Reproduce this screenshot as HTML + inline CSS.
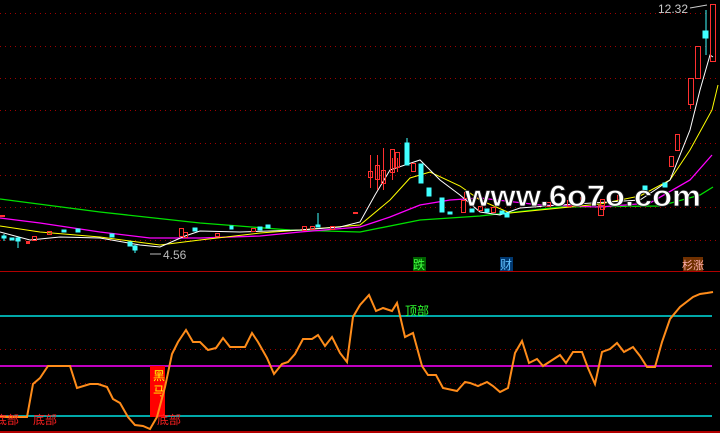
<!DOCTYPE html>
<html><head><meta charset="utf-8"><style>
html,body{margin:0;padding:0;background:#000;width:720px;height:433px;overflow:hidden}
svg{display:block}
text{font-family:"Liberation Sans","Noto Sans CJK SC",sans-serif}
</style></head><body>
<svg width="720" height="433" viewBox="0 0 720 433" xmlns="http://www.w3.org/2000/svg">
<g stroke="#a00000" stroke-width="1" stroke-dasharray="1 4">
<line x1="0" y1="13.5" x2="720" y2="13.5"/><line x1="0" y1="46.5" x2="720" y2="46.5"/>
<line x1="0" y1="78.5" x2="720" y2="78.5"/><line x1="0" y1="110.5" x2="720" y2="110.5"/>
<line x1="0" y1="143.5" x2="720" y2="143.5"/><line x1="0" y1="175.5" x2="720" y2="175.5"/>
<line x1="0" y1="207.5" x2="720" y2="207.5"/><line x1="0" y1="240.5" x2="720" y2="240.5"/>
<line x1="0" y1="349.5" x2="720" y2="349.5"/><line x1="0" y1="383.5" x2="720" y2="383.5"/>
</g>
<line x1="0" y1="271.5" x2="720" y2="271.5" stroke="#b00000"/>
<line x1="0" y1="432" x2="720" y2="432" stroke="#b00000" stroke-width="2"/>
<polyline fill="none" stroke="#00e000" stroke-width="1.3" points="0,199 100,212 200,223 290,230 360,232 420,220 480,216 560,207 660,206 700,195 713,187"/>
<polyline fill="none" stroke="#ff00ff" stroke-width="1.3" points="0,218 40,223 100,232 150,238 200,238 260,236 300,232 360,227 390,217 420,205 450,200 480,198 540,205 600,207 650,203 690,180 712,155"/>
<polyline fill="none" stroke="#ffff00" stroke-width="1" points="0,226 40,232 100,237 160,245 200,240 260,233 300,230 360,225 390,200 410,178 430,172 460,186 480,200 510,213 540,210 600,204 640,196 670,180 690,150 712,110 718,85"/>
<polyline fill="none" stroke="#ffffff" stroke-width="1" points="0,232 30,240 60,237 100,238 140,245 160,247 185,236 200,231 240,232 300,230 340,227 360,222 375,195 390,170 405,165 420,160 440,180 460,195 480,212 500,215 520,208 560,205 640,200 670,180 690,130 700,90 710,55 713,57"/>
<g stroke="#ff3030" fill="none" stroke-width="1">
<rect x="32.5" y="236.5" width="4" height="4"/><rect x="47.5" y="231.5" width="4" height="3"/><rect x="183.5" y="232.5" width="4" height="5"/>
<rect x="179.5" y="228.5" width="4" height="8"/><rect x="215.5" y="233.5" width="4" height="3"/><rect x="251.5" y="228.5" width="4" height="3"/>
<rect x="302.5" y="226.5" width="4" height="4"/><rect x="310.5" y="226.5" width="4" height="3"/><rect x="330.5" y="226.5" width="4" height="3"/>
<line x1="370.5" y1="155" x2="370.5" y2="188"/><rect x="368.5" y="171.5" width="4" height="6"/>
<line x1="377.5" y1="155" x2="377.5" y2="190"/><rect x="375.5" y="165.5" width="4" height="14"/>
<line x1="383.5" y1="148" x2="383.5" y2="190"/><rect x="381.5" y="170.5" width="4" height="13"/>
<line x1="392.5" y1="158" x2="392.5" y2="180"/><rect x="390.5" y="149.5" width="4" height="23"/>
<line x1="397.5" y1="158" x2="397.5" y2="172"/><rect x="395.5" y="152.5" width="4" height="15"/>
<rect x="411.5" y="163.5" width="4" height="8"/>
<rect x="461.5" y="200.5" width="4" height="12"/>
<rect x="464.5" y="192.5" width="4" height="6"/><rect x="478.5" y="206.5" width="4" height="4"/><rect x="491.5" y="207.5" width="4" height="5"/>
<rect x="546.5" y="202.5" width="4" height="4"/><rect x="567.5" y="200.5" width="4" height="6"/><rect x="580.5" y="197.5" width="4" height="4"/>
<rect x="600.5" y="199.5" width="4" height="10"/><rect x="617.5" y="195.5" width="4" height="4"/>
<rect x="598.5" y="205.5" width="5" height="10"/>
<rect x="669.5" y="156.5" width="4" height="10"/><rect x="675.5" y="134.5" width="4" height="16"/>
<rect x="688.5" y="78.5" width="5" height="26"/><line x1="690.5" y1="104" x2="690.5" y2="109"/>
<rect x="695.5" y="46.5" width="5" height="32"/>
<rect x="710.5" y="4.5" width="5" height="57"/>
</g>
<g fill="#ff3030"><rect x="0" y="215" width="5" height="2"/><rect x="353" y="212" width="5" height="2"/><rect x="26" y="241" width="4" height="3"/></g>
<g fill="#40ffff" stroke="#40ffff">
<line x1="4" y1="234" x2="4" y2="241"/><rect x="2" y="236" width="4" height="2"/>
<line x1="18" y1="237" x2="18" y2="248"/><rect x="16" y="238" width="4" height="3"/>
<rect x="10" y="238" width="4" height="2"/><rect x="62" y="230" width="4" height="2"/>
<rect x="76" y="229" width="4" height="3"/><rect x="110" y="234" width="4" height="3"/>
<rect x="128" y="242" width="4" height="4"/><line x1="135" y1="245" x2="135" y2="253"/><rect x="133" y="246" width="4" height="4"/>
<rect x="193" y="228" width="4" height="3"/><rect x="230" y="226" width="3" height="3"/><rect x="258" y="227" width="4" height="3"/>
<rect x="266" y="225" width="4" height="3"/><line x1="318" y1="213" x2="318" y2="226"/><rect x="316" y="225" width="4" height="2"/>
<line x1="407" y1="138" x2="407" y2="145"/><rect x="405" y="143" width="4" height="22"/>
<rect x="419" y="164" width="4" height="19"/><rect x="427" y="188" width="4" height="8"/>
<rect x="440" y="198" width="4" height="14"/><rect x="448" y="212" width="4" height="2"/>
<rect x="470" y="209" width="4" height="3"/><rect x="485" y="209" width="4" height="3"/><rect x="500" y="211" width="4" height="3"/>
<rect x="505" y="213" width="4" height="4"/><rect x="643" y="186" width="4" height="4"/><rect x="663" y="183" width="4" height="4"/>
<line x1="706" y1="10" x2="706" y2="55"/><rect x="703" y="31" width="5" height="7"/>
</g>
<text x="465" y="206" font-size="30" font-weight="bold" fill="#fff" stroke="#222" stroke-width="0.8" textLength="236" lengthAdjust="spacingAndGlyphs">www.6o7o.com</text>
<text x="163" y="259" font-size="12" fill="#bbb">4.56</text>
<line x1="150" y1="254" x2="161" y2="254" stroke="#bbb"/>
<text x="658" y="13" font-size="12" fill="#ccc">12.32</text>
<line x1="690" y1="8" x2="707" y2="5" stroke="#ccc"/>
<rect x="413" y="257" width="13" height="14" fill="#006000"/><text x="413" y="269" font-size="12" fill="#40ff40">跌</text>
<rect x="500" y="257" width="13" height="14" fill="#003870"/><text x="500" y="269" font-size="12" fill="#60c0ff">财</text>
<rect x="683" y="257" width="20" height="14" fill="#703000"/><text x="682" y="269" font-size="11" fill="#ffb0b0">杉涨</text>
<line x1="0" y1="316" x2="712" y2="316" stroke="#00e0e0" stroke-width="1.5"/>
<line x1="0" y1="366" x2="712" y2="366" stroke="#ff00ff" stroke-width="1.5"/>
<line x1="0" y1="416" x2="712" y2="416" stroke="#00e0e0" stroke-width="1.5"/>
<rect x="150" y="366" width="15" height="51" fill="#ff0000"/>
<text x="153" y="380" font-size="12" fill="#ffff00">黑</text>
<text x="153" y="395" font-size="12" fill="#ffff00">马</text>
<polyline fill="none" stroke="#ff8c1a" stroke-width="2" points="0,417 9,417 27,417 33,384 40,378 48,366 70,366 77,388 90,384 98,384 107,387 113,399 120,403 128,417 135,425 143,426 150,429 157,417 165,387 172,354 178,342 186,330 193,342 200,342 208,350 216,348 223,338 230,347 245,347 252,333 258,342 267,358 274,374 282,364 288,362 295,354 303,339 312,339 318,335 325,346 332,337 340,353 347,362 353,317 360,305 369,295 376,311 383,308 392,311 397,303 405,337 413,333 422,366 428,375 436,375 443,388 457,391 465,382 470,383 478,386 487,382 493,386 500,392 508,388 515,353 522,341 529,363 537,359 543,366 560,355 566,363 573,352 582,352 588,368 595,384 602,352 610,349 617,343 624,352 633,347 640,356 647,367 655,367 662,342 670,319 680,307 693,297 700,294 707,293 713,292"/>
<text x="-5" y="424" font-size="12" fill="#ff2020">底部</text>
<text x="33" y="424" font-size="12" fill="#ff2020">底部</text>
<text x="157" y="424" font-size="12" fill="#ff2020">底部</text>
<text x="405" y="315" font-size="12" fill="#30ff30">顶部</text>
</svg>
</body></html>
